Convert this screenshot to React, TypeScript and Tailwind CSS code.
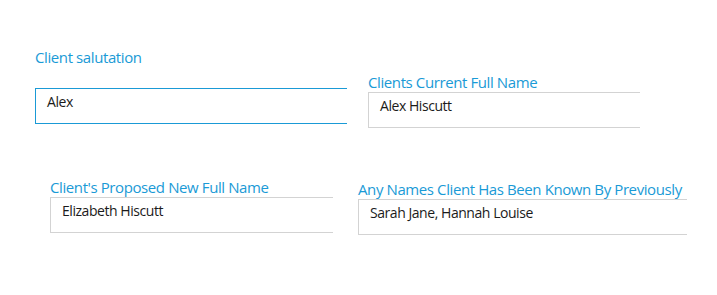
import React from 'react';

type FieldProps = {
  label: string;
  value: string;
  width: string;
  focused?: boolean;
  gap?: string;
};

function Field({ label, value, width, focused, gap }: FieldProps) {
  return (
    <div className="flex flex-col">
      <label className={`text-[15px] leading-5 tracking-[-0.4px] text-[#1a9ad6] ${gap ?? ''}`}>{label}</label>
      <div
        className={`${width} h-[36px] border-l border-t border-b pl-[11px] pt-[3px] text-[14px] leading-5 tracking-[-0.45px] text-[#1b1b1b] ${
          focused ? 'border-[#1a9ad6]' : 'border-[#d3d3d3]'
        }`}
      >
        {value}
      </div>
    </div>
  );
}

export default function App() {
  return (
    <div
      className="w-[717px] h-[295px] bg-white overflow-hidden"
      style={{ fontFamily: '"Segoe UI", "Open Sans", "Noto Sans", sans-serif' }}
    >
      <div className="flex items-start pt-[47px]">
        <div className="ml-[35px]">
          <Field label="Client salutation" value="Alex" width="w-[312px]" focused gap="mb-[21px]" />
        </div>
        <div className="ml-[21px] mt-[25px]">
          <Field label="Clients Current Full Name" value="Alex Hiscutt" width="w-[272px]" />
        </div>
      </div>
      <div className="flex items-start mt-[49px]">
        <div className="ml-[50px]">
          <Field label="Client's Proposed New Full Name" value="Elizabeth Hiscutt" width="w-[283px]" />
        </div>
        <div className="ml-[25px] mt-[2px]">
          <Field label="Any Names Client Has Been Known By Previously" value="Sarah Jane, Hannah Louise" width="w-[329px]" />
        </div>
      </div>
    </div>
  );
}
